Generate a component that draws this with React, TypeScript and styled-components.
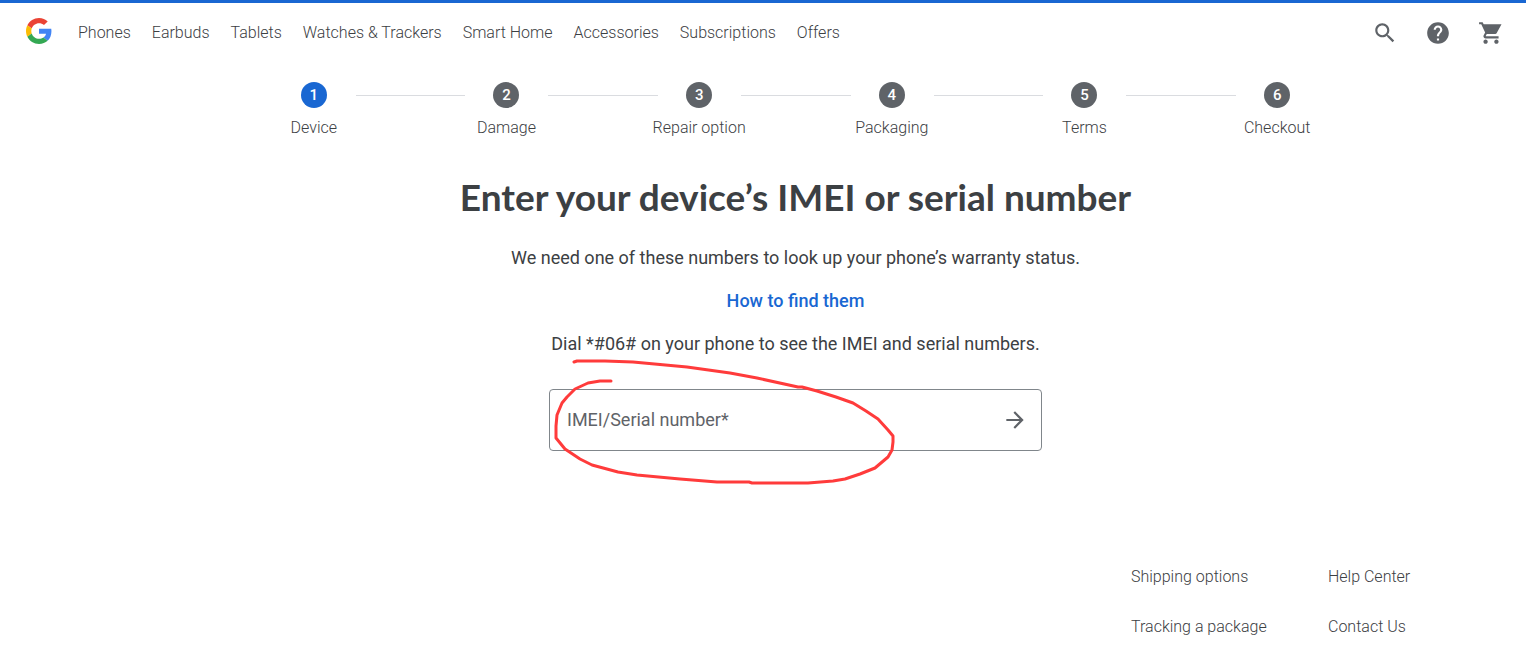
import React from "react";
import styled, { createGlobalStyle } from "styled-components";

const GlobalStyle = createGlobalStyle`
  *, *::before, *::after { box-sizing: border-box; }
  body {
    margin: 0;
    background: #fff;
    color: #3c4043;
    font-family: Roboto, "Liberation Sans", sans-serif;
    font-size: 16px;
    line-height: 24px;
  }
`;

const Page = styled.div`
  border-top: 3px solid #1967d2;
`;

const Header = styled.header`
  display: flex;
  align-items: center;
  justify-content: space-between;
  height: 60px;
  padding: 0 22px 0 26px;
`;

const HeaderGroup = styled.div`
  display: flex;
  align-items: center;
  gap: 26px;
`;

const LogoLink = styled.a`
  display: flex;
  margin-top: -4px;
`;

const Nav = styled.nav`
  display: flex;
  gap: 21px;
`;

const TextLink = styled.a`
  color: #3c4043;
  font-size: 16px;
  font-weight: 300;
  line-height: 24px;
  text-decoration: none;
  white-space: nowrap;
`;

const Actions = styled.div`
  display: flex;
  gap: 27px;
`;

const IconButton = styled.button`
  display: flex;
  padding: 0;
  border: 0;
  background: none;
  color: #5f6368;
  cursor: pointer;

  svg {
    display: block;
    fill: currentColor;
  }
`;

const Main = styled.main`
  display: flex;
  flex-direction: column;
  align-items: center;
  padding-left: 65px;
`;

const Steps = styled.ol`
  display: grid;
  grid-template-columns: repeat(6, 1fr);
  width: 100%;
  max-width: 1156px;
  margin: 0;
  padding: 19px 0 0;
  list-style: none;
`;

const Step = styled.li`
  display: grid;
  grid-template-columns: 1fr 26px 1fr;
  align-items: center;
  row-gap: 8px;
  font-size: 16px;
`;

const StepNumber = styled.span<{ $active?: boolean }>`
  grid-column: 2;
  width: 26px;
  height: 26px;
  border-radius: 50%;
  background: ${({ $active }) => ($active ? "#1967d2" : "#5f6368")};
  color: #fff;
  font-size: 15px;
  font-weight: 500;
  line-height: 26px;
  text-align: center;
`;

const StepLine = styled.span<{ $side: "start" | "end" }>`
  grid-column: ${({ $side }) => ($side === "start" ? 1 : 3)};
  grid-row: 1;
  height: 1px;
  margin-left: ${({ $side }) => ($side === "end" ? "29px" : "0")};
  margin-right: ${({ $side }) => ($side === "start" ? "28px" : "0")};
  background: #dadce0;
`;

const StepLabel = styled.span`
  grid-column: 1 / -1;
  font-weight: 300;
  text-align: center;
`;

const Title = styled.h1`
  margin: 33px 0 0;
  font-family: Lato, Roboto, sans-serif;
  font-size: 37px;
  font-weight: 700;
  line-height: 48px;
  text-align: center;
`;

const Text = styled.p`
  margin: 0;
  font-size: 18px;
  line-height: 28px;
  text-align: center;
`;

const Intro = styled.div`
  display: flex;
  flex-direction: column;
  align-items: center;
  gap: 15px;
  padding: 23px 0 31px;
`;

const HelpLink = styled.a`
  color: #1967d2;
  font-size: 18px;
  font-weight: 500;
  line-height: 28px;
  text-decoration: none;
`;

const DeviceForm = styled.form`
  position: relative;
  display: flex;
  align-items: center;
  width: 100%;
  max-width: 493px;
  height: 62px;
  padding: 0 13px 0 17px;
  border: 1px solid #80868b;
  border-radius: 4px;
`;

const DeviceInput = styled.input`
  flex: 1;
  min-width: 0;
  padding: 0;
  border: 0;
  outline: 0;
  background: none;
  color: #3c4043;
  font: inherit;
  font-size: 18px;
  line-height: 28px;

  &::placeholder {
    color: #5f6368;
    opacity: 1;
  }
`;

const Marker = styled.svg`
  position: absolute;
  top: -40px;
  left: -10px;
  pointer-events: none;
`;

const Footer = styled.footer`
  display: flex;
  justify-content: flex-end;
  padding: 114px 0 11px;
`;

const FooterColumn = styled.ul<{ $width: number }>`
  display: flex;
  flex-direction: column;
  gap: 26px;
  width: ${({ $width }) => $width}px;
  margin: 0;
  padding: 0;
  list-style: none;
`;

const navItems = [
  "Phones",
  "Earbuds",
  "Tablets",
  "Watches & Trackers",
  "Smart Home",
  "Accessories",
  "Subscriptions",
  "Offers",
];

const steps = ["Device", "Damage", "Repair option", "Packaging", "Terms", "Checkout"];

const footerColumns = [
  { width: 197, links: ["Shipping options", "Tracking a package"] },
  { width: 198, links: ["Help Center", "Contact Us"] },
];

const GoogleLogo = () => (
  <svg width="26" height="26" viewBox="0 0 48 48" aria-hidden="true">
    <path fill="#EA4335" d="M24 9.5c3.54 0 6.71 1.22 9.21 3.6l6.85-6.85C35.9 2.38 30.47 0 24 0 14.62 0 6.51 5.38 2.56 13.22l7.98 6.19C12.43 13.72 17.74 9.5 24 9.5z" />
    <path fill="#4285F4" d="M46.98 24.55c0-1.57-.15-3.09-.38-4.55H24v9.02h12.94c-.58 2.96-2.26 5.48-4.78 7.18l7.73 6c4.51-4.18 7.09-10.36 7.09-17.65z" />
    <path fill="#FBBC05" d="M10.53 28.59c-.48-1.45-.76-2.99-.76-4.59s.27-3.14.76-4.59l-7.98-6.19C.92 16.46 0 20.12 0 24c0 3.88.92 7.54 2.56 10.78l7.97-6.19z" />
    <path fill="#34A853" d="M24 48c6.48 0 11.93-2.13 15.89-5.81l-7.73-6c-2.15 1.45-4.92 2.3-8.16 2.3-6.26 0-11.57-4.22-13.47-9.91l-7.98 6.19C6.51 42.62 14.62 48 24 48z" />
  </svg>
);

export default function App() {
  return (
    <>
      <GlobalStyle />
      <Page>
        <Header>
          <HeaderGroup>
            <LogoLink href="#" aria-label="Google Store">
              <GoogleLogo />
            </LogoLink>
            <Nav>
              {navItems.map((item) => (
                <TextLink href="#" key={item}>
                  {item}
                </TextLink>
              ))}
            </Nav>
          </HeaderGroup>
          <Actions>
            <IconButton aria-label="Search">
              <svg width="26" height="26" viewBox="0 0 24 24">
                <path d="M15.5 14h-.79l-.28-.27C15.41 12.59 16 11.11 16 9.5 16 5.91 13.09 3 9.5 3S3 5.91 3 9.5 5.91 16 9.5 16c1.61 0 3.09-.59 4.23-1.57l.27.28v.79l5 4.99L20.49 19l-4.99-5zm-6 0C7.01 14 5 11.99 5 9.5S7.01 5 9.5 5 14 7.01 14 9.5 11.99 14 9.5 14z" />
              </svg>
            </IconButton>
            <IconButton aria-label="Help">
              <svg width="26" height="26" viewBox="0 0 24 24">
                <path d="M12 2C6.48 2 2 6.48 2 12s4.48 10 10 10 10-4.48 10-10S17.52 2 12 2zm1 17h-2v-2h2v2zm2.07-7.75l-.9.92C13.45 12.9 13 13.5 13 15h-2v-.5c0-1.1.45-2.1 1.17-2.83l1.24-1.26c.37-.36.59-.86.59-1.41 0-1.1-.9-2-2-2s-2 .9-2 2H8c0-2.21 1.79-4 4-4s4 1.79 4 4c0 .88-.36 1.68-.93 2.25z" />
              </svg>
            </IconButton>
            <IconButton aria-label="Cart">
              <svg width="26" height="26" viewBox="0 0 24 24">
                <path d="M7 18c-1.1 0-1.99.9-1.99 2S5.9 22 7 22s2-.9 2-2-.9-2-2-2zM1 2v2h2l3.6 7.59-1.35 2.45c-.16.28-.25.61-.25.96 0 1.1.9 2 2 2h12v-2H7.42c-.14 0-.25-.11-.25-.25l.03-.12.9-1.63h7.45c.75 0 1.41-.41 1.75-1.03L21.7 4H5.21l-.94-2H1zm16 16c-1.1 0-1.99.9-1.99 2s.89 2 1.99 2 2-.9 2-2-.9-2-2-2z" />
              </svg>
            </IconButton>
          </Actions>
        </Header>
        <Main>
          <Steps>
            {steps.map((label, index) => (
              <Step key={label} aria-current={index === 0 ? "step" : undefined}>
                {index > 0 && <StepLine $side="start" />}
                <StepNumber $active={index === 0}>{index + 1}</StepNumber>
                {index < steps.length - 1 && <StepLine $side="end" />}
                <StepLabel>{label}</StepLabel>
              </Step>
            ))}
          </Steps>
          <Title>Enter your device’s IMEI or serial number</Title>
          <Intro>
            <Text>We need one of these numbers to look up your phone’s warranty status.</Text>
            <HelpLink href="#">How to find them</HelpLink>
            <Text>Dial *#06# on your phone to see the IMEI and serial numbers.</Text>
          </Intro>
          <DeviceForm onSubmit={(event) => event.preventDefault()}>
            <DeviceInput type="text" aria-label="IMEI/Serial number" placeholder="IMEI/Serial number*" />
            <IconButton type="submit" aria-label="Continue">
              <svg width="26" height="26" viewBox="0 0 24 24">
                <path d="M12 4l-1.41 1.41L16.17 11H4v2h12.17l-5.58 5.59L12 20l8-8z" />
              </svg>
            </IconButton>
            <Marker width="364" height="150" viewBox="540 350 364 150" aria-hidden="true">
              <path
                d="M574 362L577 361H605L633 362L687 367L730 373L757 378L798 387L802 387L817 391L836 397L853 403L866 411L878 419L888 430L893 436V442L892 450L888 457L875 468L860 474L845 479L833 481L808 483H752L749 482H717L680 479L637 475L618 472L592 465L580 459L565 449L556 438V426L557 415L562 403L567 397L575 389L588 383L600 381H611"
                fill="none"
                stroke="#ff3b3b"
                strokeWidth="3"
                strokeLinecap="round"
                strokeLinejoin="round"
              />
            </Marker>
          </DeviceForm>
        </Main>
        <Footer>
          {footerColumns.map(({ width, links }) => (
            <FooterColumn $width={width} key={links[0]}>
              {links.map((link) => (
                <li key={link}>
                  <TextLink href="#">{link}</TextLink>
                </li>
              ))}
            </FooterColumn>
          ))}
        </Footer>
      </Page>
    </>
  );
}
